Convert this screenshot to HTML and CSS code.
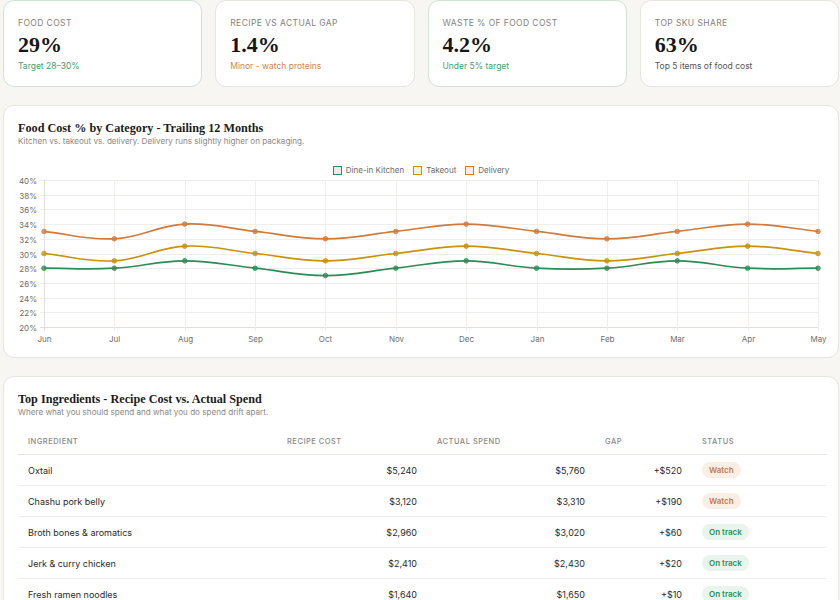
FILE: index.html
```
<!DOCTYPE html>
<html lang="en">
<head>
    <meta charset="UTF-8">
    <meta name="viewport" content="width=device-width, initial-scale=1.0">
    <title>Food Cost Dashboard</title>
    <link rel="stylesheet" href="styles.css">
</head>
<body>
    <div class="page">
        <div class="kpi-row">
            <div class="kpi-card good">
                <div class="kpi-label">Food Cost</div>
                <div class="kpi-value">29%</div>
                <div class="kpi-note green">Target 28&ndash;30%</div>
            </div>
            <div class="kpi-card">
                <div class="kpi-label">Recipe vs Actual Gap</div>
                <div class="kpi-value">1.4%</div>
                <div class="kpi-note orange">Minor - watch proteins</div>
            </div>
            <div class="kpi-card good">
                <div class="kpi-label">Waste % of Food Cost</div>
                <div class="kpi-value">4.2%</div>
                <div class="kpi-note green">Under 5% target</div>
            </div>
            <div class="kpi-card">
                <div class="kpi-label">Top SKU Share</div>
                <div class="kpi-value">63%</div>
                <div class="kpi-note">Top 5 items of food cost</div>
            </div>
        </div>

        <div class="panel">
            <h2>Food Cost % by Category - Trailing 12 Months</h2>
            <p class="sub">Kitchen vs. takeout vs. delivery. Delivery runs slightly higher on packaging.</p>
            <div class="legend">
                <span class="key"><i class="box dine"></i>Dine-in Kitchen</span>
                <span class="key"><i class="box take"></i>Takeout</span>
                <span class="key"><i class="box deli"></i>Delivery</span>
            </div>
            <svg id="chart" class="chart" width="808" height="171"></svg>
        </div>

        <div class="panel">
            <h2>Top Ingredients - Recipe Cost vs. Actual Spend</h2>
            <p class="sub">Where what you should spend and what you do spend drift apart.</p>
            <table class="ing-table">
                <colgroup>
                    <col class="c-name">
                    <col class="c-recipe">
                    <col class="c-actual">
                    <col class="c-gap">
                    <col>
                </colgroup>
                <thead>
                    <tr>
                        <th>Ingredient</th>
                        <th>Recipe Cost</th>
                        <th>Actual Spend</th>
                        <th>Gap</th>
                        <th>Status</th>
                    </tr>
                </thead>
                <tbody>
                    <tr>
                        <td>Oxtail</td>
                        <td class="num">$5,240</td>
                        <td class="num">$5,760</td>
                        <td class="num">+$520</td>
                        <td><span class="pill watch">Watch</span></td>
                    </tr>
                    <tr>
                        <td>Chashu pork belly</td>
                        <td class="num">$3,120</td>
                        <td class="num">$3,310</td>
                        <td class="num">+$190</td>
                        <td><span class="pill watch">Watch</span></td>
                    </tr>
                    <tr>
                        <td>Broth bones &amp; aromatics</td>
                        <td class="num">$2,960</td>
                        <td class="num">$3,020</td>
                        <td class="num">+$60</td>
                        <td><span class="pill ok">On track</span></td>
                    </tr>
                    <tr>
                        <td>Jerk &amp; curry chicken</td>
                        <td class="num">$2,410</td>
                        <td class="num">$2,430</td>
                        <td class="num">+$20</td>
                        <td><span class="pill ok">On track</span></td>
                    </tr>
                    <tr>
                        <td>Fresh ramen noodles</td>
                        <td class="num">$1,640</td>
                        <td class="num">$1,650</td>
                        <td class="num">+$10</td>
                        <td><span class="pill ok">On track</span></td>
                    </tr>
                </tbody>
            </table>
        </div>
    </div>

    <script>
        // line chart, drawn straight into the svg
        (function () {
            var months = ['Jun', 'Jul', 'Aug', 'Sep', 'Oct', 'Nov', 'Dec', 'Jan', 'Feb', 'Mar', 'Apr', 'May'];
            var series = [
                { color: '#d07a3c', data: [33, 32, 34, 33, 32, 33, 34, 33, 32, 33, 34, 33] },
                { color: '#c8920e', data: [30, 29, 31, 30, 29, 30, 31, 30, 29, 30, 31, 30] },
                { color: '#2e8b57', data: [28, 28, 29, 28, 27, 28, 29, 28, 28, 29, 28, 28] }
            ];
            var plotLeft = 26, plotRight = 800, plotTop = 4, plotBottom = 151;
            var ns = 'http://www.w3.org/2000/svg';
            var svg = document.getElementById('chart');

            function xAt(i) { return plotLeft + (plotRight - plotLeft) * i / (months.length - 1); }
            function yAt(v) { return plotBottom - (v - 20) / 20 * (plotBottom - plotTop); }

            function add(tag, attrs, text) {
                var el = document.createElementNS(ns, tag);
                for (var k in attrs) el.setAttribute(k, attrs[k]);
                if (text) el.textContent = text;
                svg.appendChild(el);
                return el;
            }

            // grid + axis labels
            for (var v = 20; v <= 40; v += 2) {
                var y = Math.round(yAt(v)) + 0.5;
                add('line', { x1: plotLeft - 4, x2: plotRight, y1: y, y2: y, stroke: v == 20 ? '#e2dfda' : '#f0eeea' });
                add('text', { x: plotLeft - 7, y: y + 3, 'text-anchor': 'end', 'class': 'tick' }, v + '%');
            }
            for (var i = 0; i < months.length; i++) {
                var x = Math.round(xAt(i)) + 0.5;
                add('line', { x1: x, x2: x, y1: plotTop, y2: plotBottom + 4, stroke: i == 0 ? '#e2dfda' : '#f0eeea' });
                add('text', { x: x, y: plotBottom + 15, 'text-anchor': 'middle', 'class': 'tick' }, months[i]);
            }

            // smooth curves, same control points as a 0.4 tension spline
            function curve(pts) {
                var t = 0.4, cps = [];
                for (var i = 0; i < pts.length; i++) {
                    var p = pts[i - 1] || pts[i], c = pts[i], n = pts[i + 1] || pts[i];
                    var d01 = Math.hypot(c[0] - p[0], c[1] - p[1]);
                    var d12 = Math.hypot(n[0] - c[0], n[1] - c[1]);
                    var s01 = d01 / (d01 + d12) || 0, s12 = d12 / (d01 + d12) || 0;
                    cps.push({
                        a: [c[0] - t * s01 * (n[0] - p[0]), c[1] - t * s01 * (n[1] - p[1])],
                        b: [c[0] + t * s12 * (n[0] - p[0]), c[1] + t * s12 * (n[1] - p[1])]
                    });
                }
                var d = 'M' + pts[0][0] + ' ' + pts[0][1];
                for (var j = 1; j < pts.length; j++) {
                    d += ' C' + cps[j - 1].b.join(' ') + ' ' + cps[j].a.join(' ') + ' ' + pts[j].join(' ');
                }
                return d;
            }

            series.forEach(function (s) {
                var pts = s.data.map(function (v, i) { return [xAt(i), yAt(v)]; });
                add('path', { d: curve(pts), fill: 'none', stroke: s.color, 'stroke-width': 1.7 });
                pts.forEach(function (p) {
                    add('circle', { cx: p[0], cy: p[1], r: 2.3, fill: s.color, stroke: s.color, 'stroke-width': 0.8, 'fill-opacity': 0.75 });
                });
            });
        })();
    </script>
</body>
</html>
```

FILE: styles.css
```
body {
    margin: 0;
    background-color: #f7f6f3;
    font-family: Inter, "Noto Sans", sans-serif;
    color: #2b2b2b;
}
.page {
    width: 836px;
    padding: 0 1px 0 3px;
    display: flex;
    flex-direction: column;
    gap: 18px;
}
.kpi-row {
    display: flex;
    gap: 13px;
}
.kpi-card {
    flex: 1;
    height: 87px;
    box-sizing: border-box;
    padding: 16px 14px 0;
    background-color: #fff;
    border: 1px solid #e7e5e0;
    border-radius: 11px;
}
.kpi-card.good {
    border-color: #cfe3d6;
}
.kpi-label {
    font-size: 8.5px;
    line-height: 12px;
    letter-spacing: 0.4px;
    text-transform: uppercase;
    color: #85827e;
}
.kpi-value {
    margin-top: 5px;
    font-family: "Liberation Serif", serif;
    font-weight: bold;
    font-size: 22px;
    line-height: 22px;
    color: #161616;
}
.kpi-note {
    margin-top: 4px;
    font-size: 8.5px;
    line-height: 12px;
    color: #555;
}
.kpi-note.green {
    color: #46a06a;
}
.kpi-note.orange {
    color: #cb8656;
}
.panel {
    background-color: #fff;
    border: 1px solid #e7e5e0;
    border-radius: 11px;
    padding: 15px 14px 10px;
}
.panel h2 {
    margin: 0;
    font-family: "Liberation Serif", serif;
    font-weight: bold;
    font-size: 12.2px;
    line-height: 14px;
    color: #1b1b1b;
}
.panel .sub {
    margin: 0;
    font-size: 8.1px;
    line-height: 12px;
    color: #8b8884;
}
.legend {
    margin-top: 17px;
    display: flex;
    justify-content: center;
    gap: 9px;
    font-size: 8px;
    line-height: 12px;
    color: #6d6b68;
}
.key {
    display: flex;
    align-items: center;
    gap: 4px;
}
.box {
    width: 7px;
    height: 7px;
    border: 1.5px solid;
}
.box.dine {
    border-color: #2e8b57;
    background-color: #e3efe8;
}
.box.take {
    border-color: #c8920e;
    background-color: #f6efdf;
}
.box.deli {
    border-color: #d07a3c;
    background-color: #f8ebe2;
}
.chart {
    display: block;
    overflow: visible;
}
.chart .tick {
    font-size: 8px;
    fill: #6f6d6a;
    font-family: Inter, "Noto Sans", sans-serif;
}
.ing-table {
    width: 809px;
    margin-top: 10px;
    border-collapse: collapse;
    table-layout: fixed;
    font-size: 9px;
}
.c-name {
    width: 259px;
}
.c-recipe {
    width: 150px;
}
.c-actual {
    width: 168px;
}
.c-gap {
    width: 97px;
}
.ing-table th {
    padding: 0 10px;
    height: 26px;
    text-align: left;
    font-weight: 500;
    font-size: 7.5px;
    letter-spacing: 0.5px;
    text-transform: uppercase;
    color: #8b8884;
    border-bottom: 1px solid #e9e6e1;
}
.ing-table td {
    padding: 0 10px;
    height: 30px;
    color: #2a2a2a;
    border-bottom: 1px solid #f0eeea;
}
.ing-table td.num {
    text-align: right;
}
.pill {
    display: inline-block;
    padding: 3px 7px;
    border-radius: 10px;
    font-size: 8px;
    font-weight: 600;
}
.pill.watch {
    background-color: #fbeee4;
    color: #c27c48;
}
.pill.ok {
    background-color: #e8f4ec;
    color: #2f8f57;
}
```
